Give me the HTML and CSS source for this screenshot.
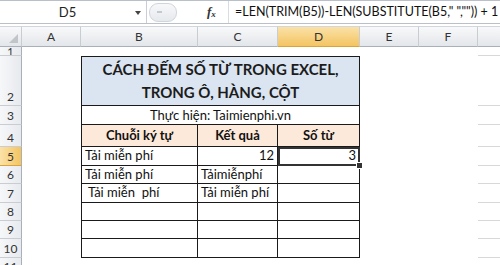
FILE: index.html
```html
<!DOCTYPE html>
<html lang="vi">
<head>
    <meta charset="UTF-8">
    <title>Đếm số từ</title>
    <link rel="stylesheet" href="styles.css">
</head>
<body>
    <div class="fbar">
        <div class="namebox">D5</div>
        <div class="arrow"></div>
        <div class="btns"><span class="pill"><i></i></span></div>
        <div class="fx">f<sub>x</sub></div>
        <div class="formula">=LEN(TRIM(B5))-LEN(SUBSTITUTE(B5," ","")) + 1</div>
    </div>

    <div class="sheet">
        <div class="row head">
            <div class="corner"></div>
            <div class="ch">A</div><div class="ch">B</div><div class="ch">C</div>
            <div class="ch sel">D</div><div class="ch">E</div><div class="ch">F</div><div class="ch last"></div>
        </div>
        <div class="row r1">
            <div class="rh">1</div><div></div><div></div><div></div><div></div><div></div><div></div><div class="g"></div>
        </div>
        <div class="row r2">
            <div class="rh">2</div><div></div>
            <div class="c title top">CÁCH ĐẾM SỐ TỪ TRONG EXCEL,<br>TRONG Ô, HÀNG, CỘT</div>
            <div></div><div></div><div class="g"></div>
        </div>
        <div class="row r3">
            <div class="rh">3</div><div></div>
            <div class="c credit">Thực hiện: Taimienphi.vn</div>
            <div></div><div></div><div class="g"></div>
        </div>
        <div class="row r4">
            <div class="rh">4</div><div></div>
            <div class="c th first">Chuỗi ký tự</div><div class="c th">Kết quả</div><div class="c th">Số từ</div>
            <div></div><div></div><div class="g"></div>
        </div>
        <div class="row r5">
            <div class="rh sel">5</div><div></div>
            <div class="c first">Tải miễn phí</div><div class="c num">12</div><div class="c num active">3</div>
            <div></div><div></div><div class="g"></div>
        </div>
        <div class="row r6">
            <div class="rh">6</div><div></div>
            <div class="c first">Tải miễn phí</div><div class="c">Tảimiễnphí</div><div class="c"></div>
            <div></div><div></div><div class="g"></div>
        </div>
        <div class="row r7">
            <div class="rh">7</div><div></div>
            <div class="c first">&nbsp;Tải miễn&nbsp; phí</div><div class="c">Tải miễn phí</div><div class="c"></div>
            <div></div><div></div><div class="g"></div>
        </div>
        <div class="row r8">
            <div class="rh">8</div><div></div>
            <div class="c first"></div><div class="c"></div><div class="c"></div>
            <div></div><div></div><div class="g"></div>
        </div>
        <div class="row r9">
            <div class="rh">9</div><div></div>
            <div class="c first"></div><div class="c"></div><div class="c"></div>
            <div></div><div></div><div class="g"></div>
        </div>
        <div class="row r10">
            <div class="rh">10</div><div></div>
            <div class="c first"></div><div class="c"></div><div class="c"></div>
            <div></div><div></div><div class="g"></div>
        </div>
        <div class="row r11">
            <div class="rh">11</div><div></div><div></div><div></div><div></div><div></div><div></div><div class="g"></div>
        </div>
    </div>
</body>
</html>
```

FILE: styles.css
```css
body{
    margin: 0;
    width: 500px;
    height: 265px;
    overflow: hidden;
    background-color: #ffffff;
    font-family: Lato, "Noto Sans", sans-serif;
    color: #111;
}

/* formula bar */
.fbar{
    display: flex;
    align-items: center;
    height: 22px;
    border-top: 1px solid #b9c0c9;
    border-bottom: 1px solid #b9c0c9;
    background-color: #fff;
}
.namebox{
    width: 135px;
    text-align: center;
    font-size: 13px;
    color: #222;
}
.arrow{
    width: 0;
    height: 0;
    border-left: 3px solid transparent;
    border-right: 3px solid transparent;
    border-top: 4px solid #444;
    margin: 2px 5px 0 0;
}
.btns{
    width: 60px;
    height: 22px;
    border-left: 1px solid #c8ced6;
    display: flex;
    align-items: center;
}
.pill{
    width: 26px;
    height: 17px;
    margin-left: 2px;
    border: 1px solid #d0d5dc;
    border-radius: 9px;
    background: linear-gradient(#f7f8fa, #e6e9ed);
    position: relative;
}
.pill i{
    position: absolute;
    left: 7px;
    top: 7px;
    width: 5px;
    height: 2px;
    background-color: #c4c9cf;
}
.fx{
    width: 21px;
    font-family: "Liberation Serif", serif;
    font-style: italic;
    font-weight: bold;
    font-size: 13px;
    color: #333;
}
.fx sub{
    font-size: 9px;
    vertical-align: -1px;
}
.formula{
    flex: 1;
    height: 22px;
    line-height: 22px;
    padding-left: 6px;
    border-left: 1px solid #d9dde2;
    font-size: 12.5px;
    white-space: nowrap;
    color: #111;
}

/* sheet */
.sheet{
    margin-top: 2px;
}
.row{
    display: grid;
    grid-template-columns: 22px 59px 117px 80px 82px 59px 59px 1fr;
}
.row > div{
    box-sizing: border-box;
}
.head{
    height: 20px;
}
.corner, .ch{
    background: linear-gradient(#f8f9fa, #e3e6ea);
    border-right: 1px solid #c9cdd2;
    border-bottom: 1px solid #a9b0b8;
    border-top: 1px solid #d2d6db;
    font-size: 12px;
    color: #333;
    text-align: center;
    line-height: 19px;
}
.corner{
    position: relative;
}
.corner::after{
    content: "";
    position: absolute;
    right: 3px;
    bottom: 3px;
    border-left: 9px solid transparent;
    border-bottom: 9px solid #c1c5ca;
}
.ch.sel, .rh.sel{
    background: linear-gradient(#fbe2a8, #f3c462);
    border-bottom-color: #d9a43c;
}
.ch.last{
    border-right: none;
}
.rh{
    background: linear-gradient(90deg, #f6f7f9, #e7eaee);
    border-right: 1px solid #a9b0b8;
    border-bottom: 1px solid #c9cdd2;
    font-size: 12px;
    color: #333;
    text-align: center;
    display: flex;
    align-items: flex-end;
    justify-content: center;
    padding-bottom: 1px;
}
.rh.sel{
    background: linear-gradient(90deg, #fbe2a8, #f3c462);
}
.g{
    border-bottom: 1px solid #d6d8db;
}
.r1{ height: 10px; }
.r1 .rh{ font-size: 11px; line-height: 6px; overflow: hidden; padding-bottom: 0; }
.r2{ height: 50px; }
.r3{ height: 19px; }
.r4{ height: 22px; }
.r5{ height: 19px; }
.r6{ height: 18px; }
.r7{ height: 19px; }
.r8{ height: 18px; }
.r9{ height: 18px; }
.r10{ height: 19px; }
.r11{ height: 18px; }

/* table cells */
.c{
    border-right: 1px solid #1a1a1a;
    border-bottom: 1px solid #1a1a1a;
    font-size: 13px;
    line-height: 17px;
    padding: 0 3px;
    white-space: nowrap;
}
.c.first, .c.title, .c.credit{
    border-left: 1px solid #1a1a1a;
}
.title{
    grid-column: span 3;
    border-top: 1px solid #1a1a1a;
    background-color: #dbe5f1;
    font-size: 15px;
    font-weight: bold;
    text-align: center;
    line-height: 23px;
    padding-top: 1px;
    color: #1c1c1c;
}
.credit{
    grid-column: span 3;
    text-align: center;
    line-height: 18px;
}
.th{
    background-color: #fde9d9;
    font-weight: bold;
    text-align: center;
    line-height: 21px;
}
.num{
    text-align: right;
}
.active{
    position: relative;
    outline: 2px solid #333;
    outline-offset: -2px;
}
.active::after{
    content: "";
    position: absolute;
    right: -4px;
    bottom: -4px;
    width: 5px;
    height: 5px;
    background-color: #333;
    border: 1px solid #fff;
}
```
